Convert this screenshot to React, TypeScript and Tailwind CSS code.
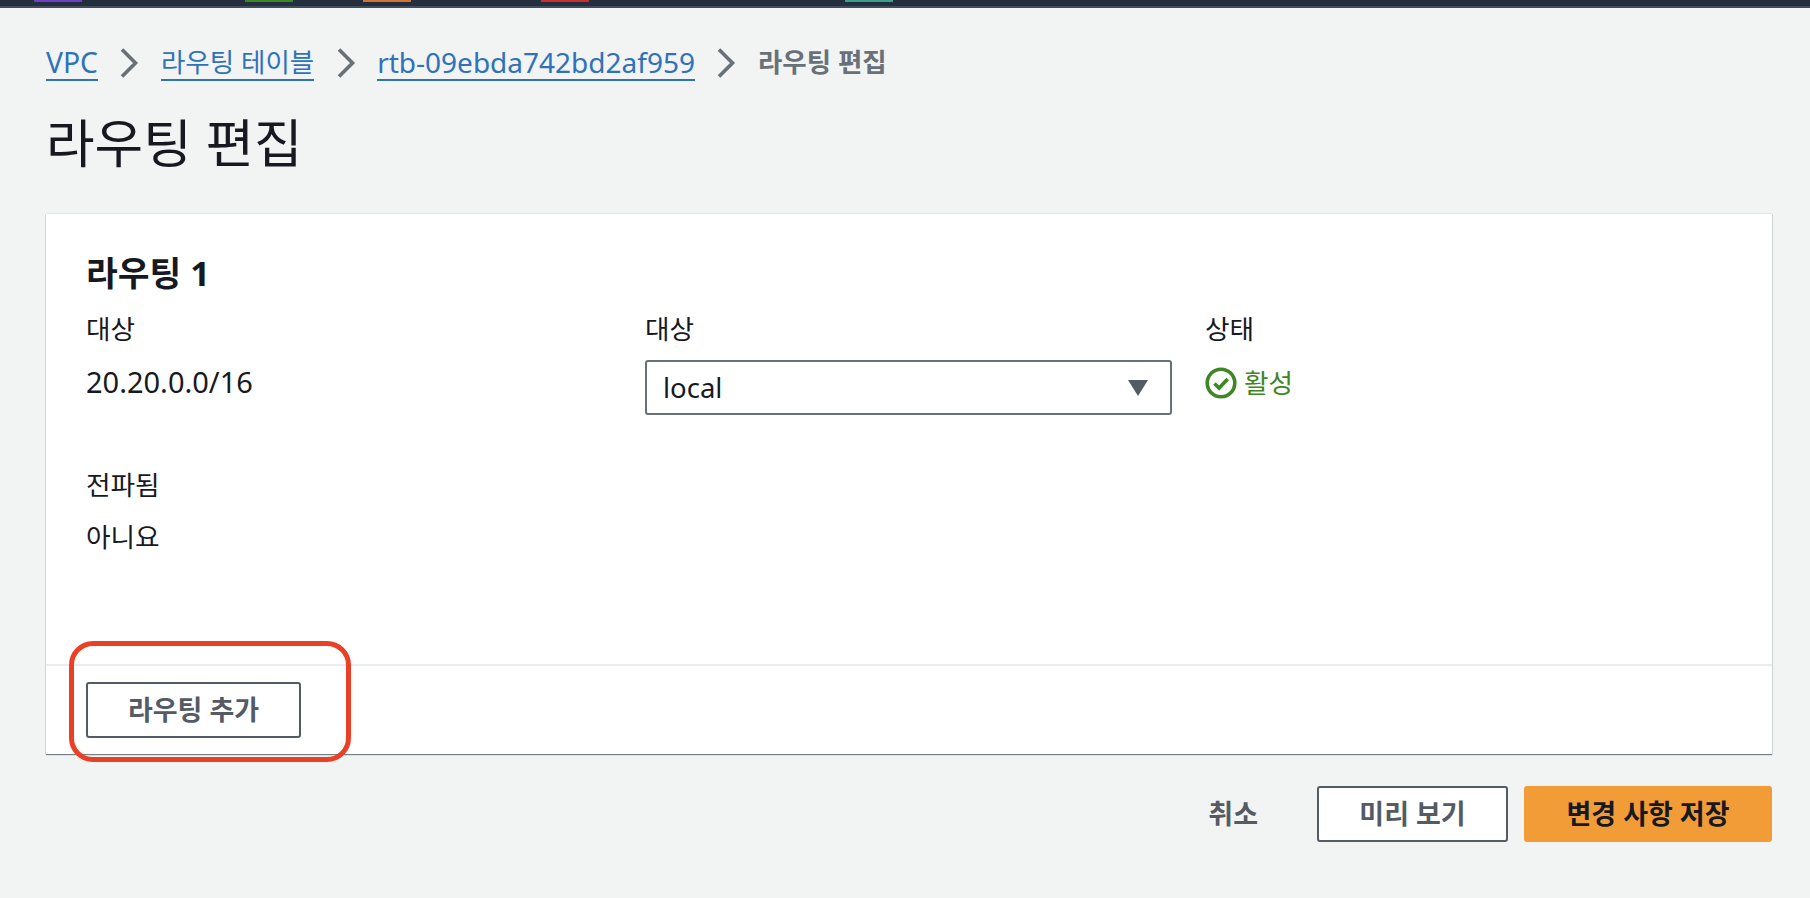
const font = { fontFamily: '"Noto Sans", "Noto Sans CJK KR", sans-serif' };

const topBarBlocks = [
  { ml: "ml-[34px]", color: "bg-[#6b40c4]" },
  { ml: "ml-[163px]", color: "bg-[#3f8624]" },
  { ml: "ml-[70px]", color: "bg-[#d1742f]" },
  { ml: "ml-[130px]", color: "bg-[#c7302c]" },
  { ml: "ml-[256px]", color: "bg-[#3d9e8c]" },
];

function Crumb({ children, size }: { children: string; size: string }) {
  return (
    <a className={`border-b-2 border-[#2f72b9] text-[#2f72b9] leading-[34px] ${size}`}>
      {children}
    </a>
  );
}

function Sep() {
  return (
    <svg viewBox="0 0 20 30" className="mx-[21.5px] h-[30px] w-[20px]" fill="none" stroke="#687078">
      <path d="M3 1.5L16.5 15L3 28.5" strokeWidth="3.6" />
    </svg>
  );
}

export default function App() {
  return (
    <div
      className="relative h-[898px] w-[1810px] overflow-hidden bg-[#f2f3f3] text-[#16191f]"
      style={font}
    >
      <div className="flex h-[8px] items-start border-b-2 border-[#414d5c] bg-[#232f3e]">
        {topBarBlocks.map((b, i) => (
          <div key={i} className={`h-[2px] w-[48px] ${b.ml} ${b.color}`} />
        ))}
      </div>

      <div className="px-[46px]">
        <nav className="mt-[36px] flex h-[38px] items-center">
          <Crumb size="text-[28.3px]">VPC</Crumb>
          <Sep />
          <Crumb size="text-[26.5px]">라우팅 테이블</Crumb>
          <Sep />
          <Crumb size="text-[28px]">rtb-09ebda742bd2af959</Crumb>
          <Sep />
          <span className="text-[26.5px] font-semibold text-[#687078]">라우팅 편집</span>
        </nav>

        <h1 className="mt-[25px] text-[52.8px] leading-[72px] font-normal">라우팅 편집</h1>

        <section className="mt-[35px] w-[1726px] bg-white shadow-[0_1px_1px_rgba(0,28,36,0.5),0_0_1px_rgba(0,28,36,0.3)]">
          <div className="h-[450px] pt-[39px] pr-[39px] pl-[40px]">
            <h2 className="text-[34.5px] leading-[40px] font-bold">라우팅 1</h2>

            <div className="mt-[19px] grid grid-cols-[526px_527px_1fr] gap-x-[33px] text-[26.7px]">
              <div>
                <div className="leading-[34px]">대상</div>
                <div className="mt-[19px] text-[29px] leading-[34px]">20.20.0.0/16</div>
              </div>
              <div>
                <div className="leading-[34px]">대상</div>
                <div className="mt-[14px] flex h-[55px] items-center justify-between rounded-[3px] border-2 border-[#687078] pr-[22px] pl-[16px]">
                  <span className="text-[27.5px]">local</span>
                  <span className="h-0 w-0 border-x-[10px] border-t-[16px] border-x-transparent border-t-[#545b64]" />
                </div>
              </div>
              <div>
                <div className="leading-[34px]">상태</div>
                <div className="mt-[20px] flex items-center gap-[7px] text-[#3f8624]">
                  <svg viewBox="0 0 32 32" className="h-[32px] w-[32px]" fill="none" stroke="#3f8624">
                    <circle cx="16" cy="16" r="13.8" strokeWidth="3.6" />
                    <path d="M9.5 16.5l4.6 4.6 8.6-9" strokeWidth="3.6" />
                  </svg>
                  <span className="leading-[34px]">활성</span>
                </div>
              </div>
            </div>

            <div className="mt-[53px] text-[26.7px]">
              <div className="leading-[34px]">전파됨</div>
              <div className="mt-[18px] leading-[34px]">아니요</div>
            </div>
          </div>

          <div className="h-[90px] border-t-2 border-[#eaeded] px-[40px] pt-[16px]">
            <button className="h-[56px] w-[215px] rounded-[3px] border-2 border-[#545b64] text-[27px] font-bold text-[#545b64]">
              라우팅 추가
            </button>
          </div>
        </section>

        <div className="mt-[32px] flex w-[1726px] items-center justify-end text-[27px] font-bold">
          <button className="mr-[59px] text-[#545b64]">취소</button>
          <button className="mr-[16px] h-[56px] w-[191px] rounded-[3px] border-2 border-[#545b64] bg-white text-[#545b64]">
            미리 보기
          </button>
          <button className="h-[56px] w-[248px] rounded-[3px] bg-[#f29c38] text-[#16191f]">
            변경 사항 저장
          </button>
        </div>
      </div>

      <div className="absolute top-[641px] left-[69px] h-[121px] w-[282px] rounded-[24px] border-[5px] border-[#ea4025]" />
    </div>
  );
}
